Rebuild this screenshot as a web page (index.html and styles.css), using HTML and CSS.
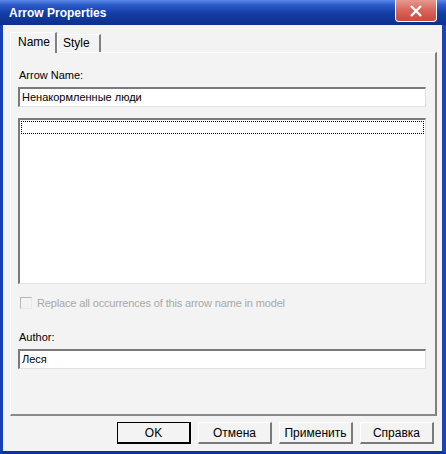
FILE: index.html
```html
<!DOCTYPE html>
<html lang="en">
  <head>
    <meta charset="UTF-8" />
    <title>Arrow Properties</title>
    <link rel="stylesheet" href="styles.css">
  </head>
  <body>
    <div class="window">
      <div class="titlebar">
        <span class="title">Arrow Properties</span>
        <div class="close-btn">
          <svg width="14" height="12" viewBox="0 0 14 12">
            <path d="M2 1 L12 11 M12 1 L2 11" stroke="#fff" stroke-width="2.4" />
          </svg>
        </div>
      </div>
      <div class="client">
        <div class="tabs">
          <div class="tab active">Name</div>
          <div class="tab">Style</div>
        </div>
        <div class="panel">
          <label class="field-label">Arrow Name:</label>
          <div class="textbox">Ненакормленные люди</div>
          <div class="listbox">
            <div class="list-focus"></div>
          </div>
          <div class="check-row">
            <span class="checkbox"></span>
            <span class="check-text">Replace all occurrences of this arrow name in model</span>
          </div>
          <label class="field-label">Author:</label>
          <div class="textbox">Леся</div>
        </div>
        <div class="button-row">
          <button class="btn default-btn">OK</button>
          <button class="btn">Отмена</button>
          <button class="btn">Применить</button>
          <button class="btn">Справка</button>
        </div>
      </div>
    </div>
  </body>
</html>
```

FILE: styles.css
```css
body {
  margin: 0;
  background: #f3f3f3;
  font-family: "Liberation Sans", Arial, sans-serif;
  font-size: 11px;
  color: #000;
}
.window {
  width: 446px;
  height: 454px;
  box-sizing: border-box;
  background: #0831a8;
  border-left: 3px solid #1641b8;
  border-right: 4px solid #1c44b4;
  border-bottom: 3px solid #0f32a0;
  display: flex;
  flex-direction: column;
}
.titlebar {
  height: 25px;
  margin-left: -3px;
  margin-right: -4px;
  padding-left: 9px;
  background: linear-gradient(to bottom, #5a87e6 0%, #2c5ccc 20%, #153fa6 50%, #0d2f8c 100%);
  display: flex;
  align-items: center;
  justify-content: space-between;
}
.title {
  color: #fff;
  font-family: "Liberation Sans", Arial, sans-serif;
  font-weight: bold;
  font-size: 12px;
  margin-top: 1px;
}
.close-btn {
  width: 42px;
  height: 22px;
  margin-right: 9px;
  margin-top: -3px;
  box-sizing: border-box;
  border: 1px solid #fff;
  border-top: none;
  border-radius: 0 0 4px 4px;
  background: linear-gradient(to bottom, #e59a90 0%, #d9645a 50%, #c94a40 100%);
  display: flex;
  align-items: center;
  justify-content: center;
}
.client {
  flex: 1;
  background: #f3f3f3;
  padding: 6px 5px 0 7px;
  display: flex;
  flex-direction: column;
}
.tabs {
  display: flex;
  align-items: flex-end;
  height: 21px;
}
.tab {
  height: 17px;
  padding: 0 9px 0 5px;
  line-height: 17px;
  font-size: 12px;
  border-top: 1px solid #fff;
  border-left: 1px solid #fff;
  border-right: 2px solid #808080;
  background: #f3f3f3;
}
.tab.active {
  height: 20px;
  line-height: 19px;
  padding: 0 5px 0 7px;
  margin-bottom: -1px;
  position: relative;
  z-index: 1;
  font-size: 12px;
}
.panel {
  height: 364px;
  box-sizing: border-box;
  border-top: 1px solid #fff;
  border-left: 1px solid #fff;
  border-right: 2px solid #7f7f7f;
  border-bottom: 2px solid #8a8a8a;
  padding: 16px 9px 0 7px;
  display: flex;
  flex-direction: column;
}
.field-label {
  display: block;
  font-size: 11px;
  height: 15px;
  margin-bottom: 3px;
  margin-left: 1px;
}
.textbox {
  height: 20px;
  box-sizing: border-box;
  background: #fff;
  border-top: 2px solid #7a7a7a;
  border-left: 2px solid #7a7a7a;
  border-right: 1px solid #e2e2e2;
  border-bottom: 1px solid #e2e2e2;
  padding-left: 2px;
  font-size: 11px;
  line-height: 17px;
}
.listbox {
  height: 166px;
  box-sizing: border-box;
  margin-top: 11px;
  background: #fff;
  border-top: 2px solid #7a7a7a;
  border-left: 2px solid #7a7a7a;
  border-right: 1px solid #e2e2e2;
  border-bottom: 1px solid #e2e2e2;
  padding: 1px 1px 0 1px;
}
.list-focus {
  height: 13px;
  box-sizing: border-box;
  border: 1px dotted #000;
}
.check-row {
  display: flex;
  align-items: center;
  height: 14px;
  margin-top: 12px;
  margin-left: 2px;
  margin-bottom: 21px;
}
.checkbox {
  width: 12px;
  height: 12px;
  box-sizing: border-box;
  border-top: 1px solid #b8b8b8;
  border-left: 1px solid #b8b8b8;
  border-right: 1px solid #e8e8e8;
  border-bottom: 1px solid #e8e8e8;
  margin-right: 5px;
}
.check-text {
  color: #a8a8a8;
  font-size: 11px;
  letter-spacing: -0.15px;
}
.button-row {
  display: flex;
  justify-content: flex-end;
  gap: 7px;
  padding: 6px 3px 0 0;
}
.btn {
  width: 74px;
  height: 22px;
  font-family: "Liberation Sans", Arial, sans-serif;
  font-size: 12px;
  background: #f3f3f3;
  border-top: 1px solid #fff;
  border-left: 1px solid #fff;
  border-right: 2px solid #7a7a7a;
  border-bottom: 2px solid #7a7a7a;
  padding: 0;
}
.default-btn {
  border: 2px solid #000;
  border-top-width: 1px;
  border-left-width: 1px;
  outline: none;
}
```
